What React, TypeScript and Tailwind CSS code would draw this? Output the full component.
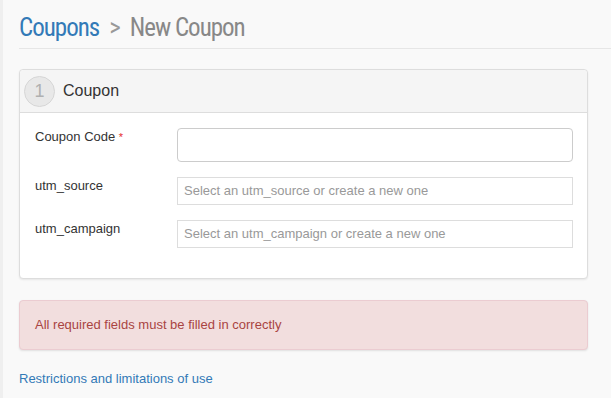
export default function App() {
  return (
    <div className="min-h-[398px] w-[611px] bg-[#f9f9f9] border-l-[3px] border-[#efefef] font-['Liberation_Sans',Arial,sans-serif] text-[13px] text-[#333]">
      <div className="pl-[16px]">
        <div className="h-[49px] border-b border-[#e6e6e6] flex items-end pb-[4px]">
          <h1 className="font-['Roboto',sans-serif] [font-stretch:75%] text-[25px] leading-[32px] tracking-[-1px] text-[#888] flex items-center">
            <span className="text-[#337ab7]">Coupons</span>
            <span className="mx-[10px] text-[#999]">&gt;</span>
            <span>New Coupon</span>
          </h1>
        </div>
        <div className="pr-[23px] pt-[20px]">
          <div className="bg-white border border-[#dddddd] rounded-[4px] shadow-[0_1px_2px_rgba(0,0,0,0.08)]">
            <div className="h-[43px] bg-[#f5f5f5] border-b border-[#dddddd] rounded-t-[4px] flex items-center pl-[4px]">
              <div className="w-[31px] h-[31px] rounded-full bg-[#e8e8e8] border border-[#d6d6d6] flex items-center justify-center text-[18px] text-[#b0b0b0]">
                1
              </div>
              <div className="ml-[8px] text-[16px] text-[#333]">Coupon</div>
            </div>
            <div className="pt-[15px] pb-[30px] pl-[15px] pr-[14px] flex flex-col gap-[15px]">
              <div className="flex">
                <div className="w-[142px] leading-[18px]">
                  Coupon Code <span className="text-[#e52d2d] text-[11px] align-top">*</span>
                </div>
                <div className="flex-1 h-[34px] border border-[#cccccc] rounded-[4px] bg-white" />
              </div>
              <div className="flex">
                <div className="w-[142px] leading-[18px]">utm_source</div>
                <div className="flex-1 h-[28px] border border-[#dddddd] bg-white flex items-center pl-[6px] text-[#999]">
                  Select an utm_source or create a new one
                </div>
              </div>
              <div className="flex">
                <div className="w-[142px] leading-[18px]">utm_campaign</div>
                <div className="flex-1 h-[28px] border border-[#dddddd] bg-white flex items-center pl-[6px] text-[#999]">
                  Select an utm_campaign or create a new one
                </div>
              </div>
            </div>
          </div>
          <div className="mt-[21px] h-[50px] bg-[#f2dede] border border-[#ebccd1] rounded-[4px] shadow-[0_1px_2px_rgba(0,0,0,0.1)] flex items-center pl-[15px] text-[#a94442]">
            All required fields must be filled in correctly
          </div>
          <div className="mt-[21px] text-[#337ab7] leading-[16px]">Restrictions and limitations of use</div>
        </div>
      </div>
    </div>
  );
}
